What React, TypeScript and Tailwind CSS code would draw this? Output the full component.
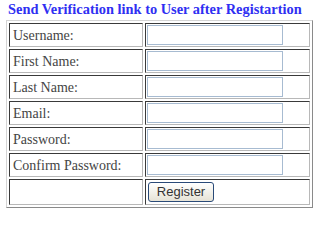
const fields = ['Username:', 'First Name:', 'Last Name:', 'Email:', 'Password:', 'Confirm Password:'];

const cell =
  'border border-t-[#3a3a3a] border-l-[#3a3a3a] border-b-[#b8b8b8] border-r-[#b8b8b8] p-0 align-middle';

export default function App() {
  return (
    <div className="h-[213px] w-[320px] bg-white font-['Liberation_Serif',serif]">
      <h3 className="pl-[8px] pt-[1px] text-[14.4px] leading-[16px] font-bold text-[#2f2ff2]">
        Send Verification link to User after Registartion
      </h3>
      <table className="ml-[6px] mt-[3px] border-separate border-spacing-[2px] border border-t-[#d4d4d4] border-l-[#d4d4d4] border-b-[#8a8a8a] border-r-[#8a8a8a]">
        <tbody>
          {fields.map((label) => (
            <tr key={label}>
              <td className={`${cell} h-[24px] w-[134px] pl-[3px] pt-[1px] text-[14px] leading-[16px] text-[#444]`}>
                {label}
              </td>
              <td className={`${cell} h-[24px] w-[165px] px-[1px] py-[1px]`}>
                <input
                  type={label.startsWith('Password') || label.startsWith('Confirm') ? 'password' : 'text'}
                  className="block h-[20px] w-[136px] border border-[#a7bbd1] bg-white px-1 text-[13px] outline-none"
                />
              </td>
            </tr>
          ))}
          <tr>
            <td className={`${cell} h-[26px] w-[134px]`}></td>
            <td className={`${cell} h-[26px] w-[165px] pl-[2px]`}>
              <button className="block h-[20px] w-[66px] rounded-[3px] border border-[#2a4a78] bg-gradient-to-b from-white to-[#e6e3d6] text-center font-['Liberation_Sans',sans-serif] text-[13px] leading-[18px] text-[#333]">
                Register
              </button>
            </td>
          </tr>
        </tbody>
      </table>
    </div>
  );
}
